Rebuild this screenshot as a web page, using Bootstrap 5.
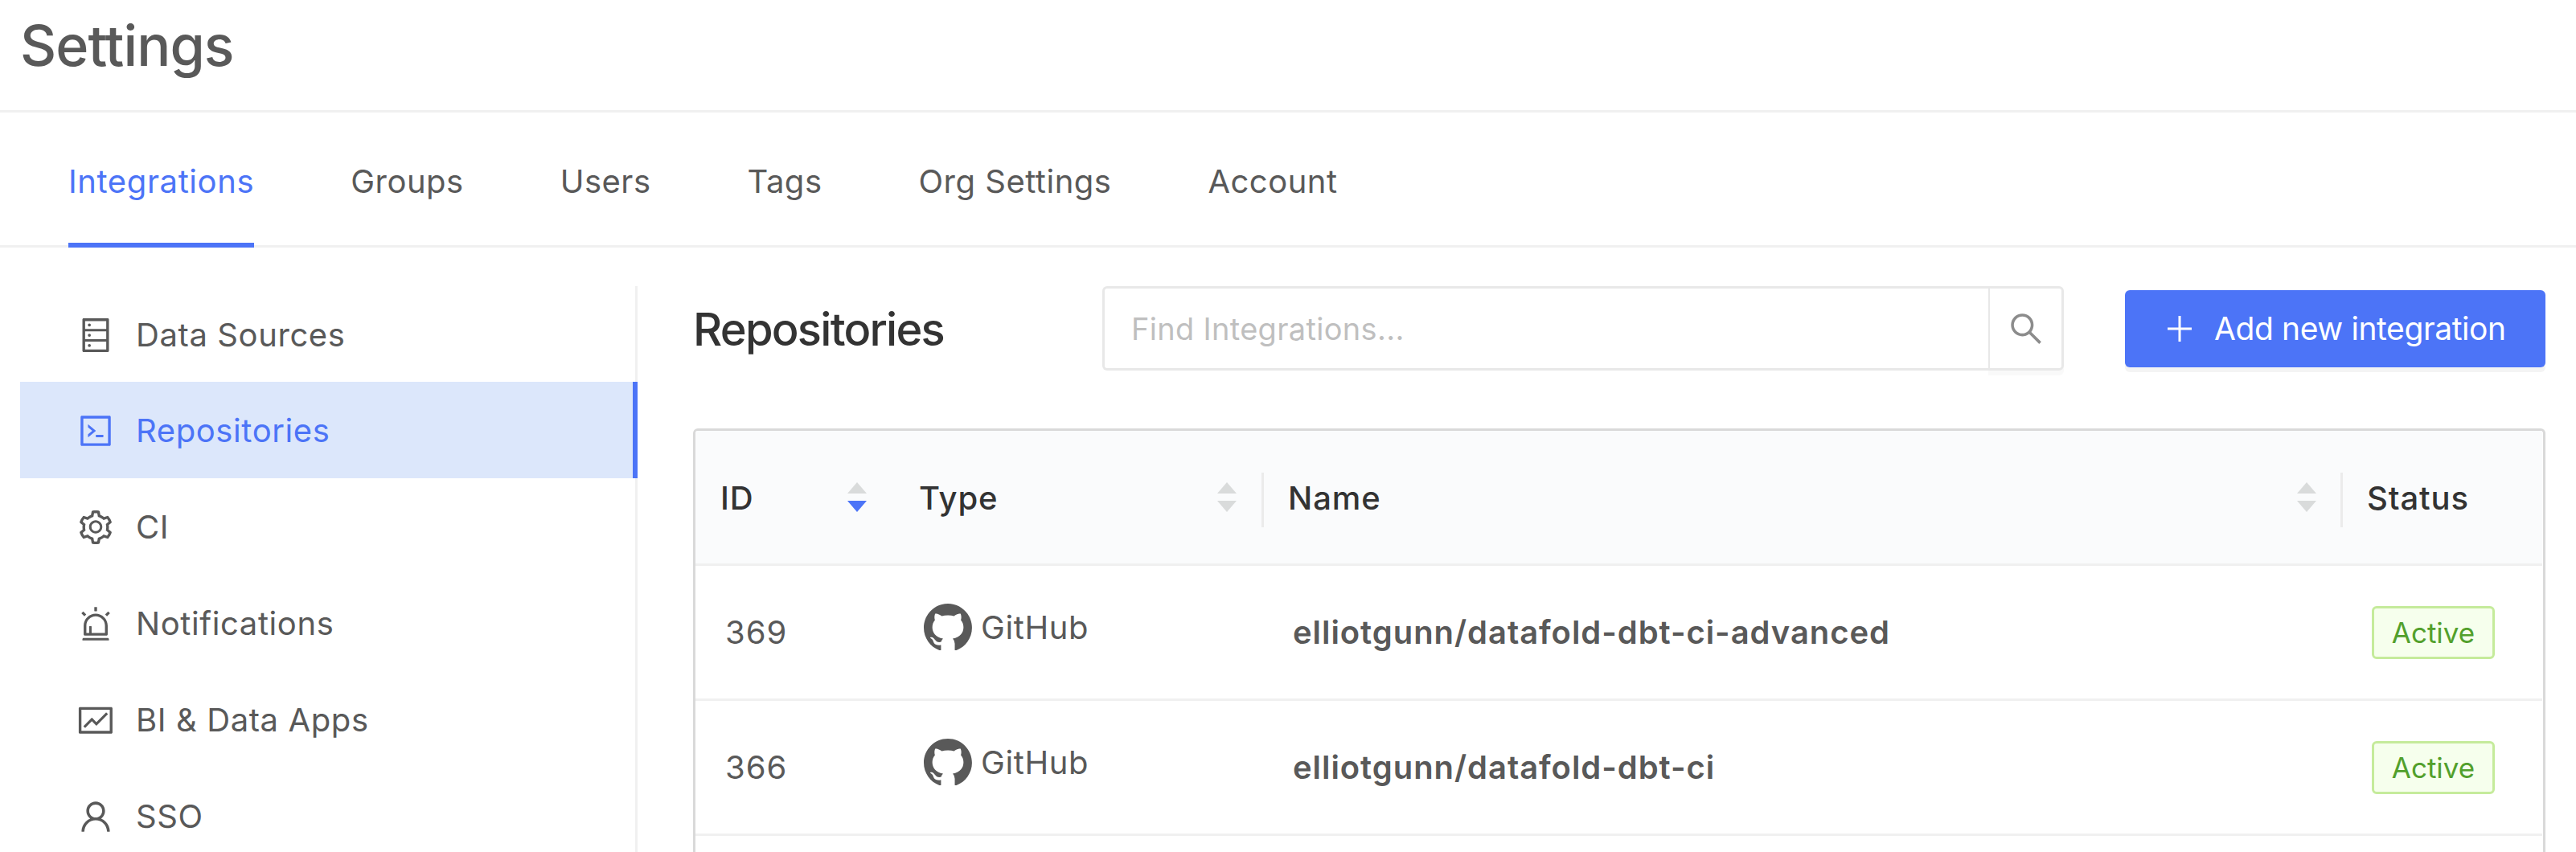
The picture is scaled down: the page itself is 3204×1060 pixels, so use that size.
<!DOCTYPE html>
<html lang="en">
<head>
<meta charset="utf-8">
<title>Settings</title>
<link href="https://cdn.jsdelivr.net/npm/bootstrap@5.3.0/dist/css/bootstrap.min.css" rel="stylesheet">
<style>
html,body{height:1060px;overflow:hidden;background:#fff}
body{font-family:Inter,"Liberation Sans",sans-serif;font-size:40px;color:#595959;line-height:1.5;letter-spacing:.6px}
.pg-head{height:140px;border-bottom:3px solid #f0f0f0;padding:0 25px}
.pg-title{font-size:70px;line-height:114px;font-weight:500;color:#595959;margin:0;letter-spacing:-.9px}
.tab-bar{height:168px;border-bottom:3px solid #f0f0f0;padding-left:85px;gap:120px;letter-spacing:.5px}
.tab-bar .nav-link{padding:0;height:168px;line-height:172px;color:#595959;font-size:40px;border-bottom:6px solid transparent}
.tab-bar .nav-link.active{color:#4c74f7;border-bottom-color:#4c74f7;letter-spacing:.6px}
.side-wrap{width:768px;margin-left:25px;margin-top:48px;box-shadow:inset -3px 0 0 #f0f0f0;height:704px;flex:none;overflow:hidden}
.side-item{height:120px;padding:2px 0 0 70px;border:0;border-radius:0;color:#595959;font-size:40px;gap:26px;width:768px;background:transparent}
.side-item.active{background:#dce7fb;color:#4c74f7;border-right:6px solid #4c74f7}
.ico{fill:currentColor;flex:none}
.main-pane{flex:1;padding:48px 38px 0 69px;min-width:0}
.tool-row{height:177px;align-items:flex-start}
.sec-title{font-size:56px;font-weight:500;color:#333;line-height:109px;width:509px;margin:0;letter-spacing:-1.75px;flex:none}
.find-box{width:1196px;height:105px;flex:none}
.find-box .form-control{height:105px;border:3px solid #e8e8e8;border-right:0;border-radius:6px 0 0 6px;font-size:38px;letter-spacing:.3px;padding:0 33px;color:#595959;box-shadow:none}
.find-box .form-control::placeholder{color:#bfbfbf}
.find-btn{width:94px;height:105px;padding:0;border:3px solid #e8e8e8;border-left:2px solid #e8e8e8;border-radius:0 6px 6px 0;color:#8c8c8c;background:#fff;box-shadow:0 6px 0 #f9f9f9}
.add-btn{margin-left:76px;margin-top:5px;width:523px;height:96px;background:#4c74f7;border:0;border-radius:6px;color:#fff;font-size:39px;letter-spacing:-.4px;padding:0 0 0 53px;gap:28px;box-shadow:0 6px 0 #f4f4f4;white-space:nowrap}
.tbl-wrap{border:3px solid #d9d9d9;border-bottom:0;border-radius:6px 6px 0 0;height:527px;overflow:hidden}
.repo-tbl{table-layout:fixed;width:2297px;margin:0;font-size:40px;border-collapse:separate;border-spacing:0}
.cw-id{width:247px}.cw-type{width:459px}.cw-name{width:1342px}.cw-state{width:249px}
.repo-tbl th{height:168px;background:#fafbfc;border-bottom:3px solid #f0f0f0;color:#333;font-weight:500;letter-spacing:.9px;padding:2px 0 0 31px;vertical-align:middle;position:relative;box-shadow:none}
.repo-tbl td{height:168px;border-bottom:3px solid #f0f0f0;padding:1px 0 0 37px;vertical-align:middle;color:#595959;box-shadow:none;background:#fff}
.repo-tbl td.id-cell{letter-spacing:1px}
.th-in{display:flex;align-items:center;justify-content:space-between}
.sorter{display:flex;flex-direction:column;gap:9px;flex:none;margin-top:-2px}
.sorter i{display:block;width:0;height:0;border-left:12px solid transparent;border-right:12px solid transparent}
.sorter .up{border-bottom:14px solid #d9dbdb}
.sorter .dn{border-top:14px solid #d9dbdb}
.sorter .dn.on{border-top-color:#4c74f7}
.sort-a{margin-right:34px}.sort-b{margin-right:33px}.sort-c{margin-right:32px}
.th-sep::before{content:"";position:absolute;left:-2px;top:52px;width:3px;height:68px;background:#ebebeb}
.gh-cell{display:flex;align-items:flex-start;gap:11px;margin-top:-12px}
.repo-tbl td.repo-name{font-weight:600;color:#595959;letter-spacing:.94px}
.state-tag{display:inline-block;width:153px;height:66px;line-height:60px;text-align:center;border:3px solid #c5eb9b;background:#f6ffed;color:#52a02c;border-radius:6px;font-size:35px;letter-spacing:0}
</style>
</head>
<body>
<div class="pg-head"><h1 class="pg-title">Settings</h1></div>
<nav class="nav tab-bar">
  <a class="nav-link active" href="#">Integrations</a>
  <a class="nav-link" href="#">Groups</a>
  <a class="nav-link" href="#">Users</a>
  <a class="nav-link" href="#">Tags</a>
  <a class="nav-link" href="#">Org Settings</a>
  <a class="nav-link" href="#">Account</a>
</nav>
<div class="d-flex">
  <div class="side-wrap">
    <div class="list-group list-group-flush">
      <a href="#" class="list-group-item side-item d-flex align-items-center"><svg class="ico" width="48" height="48" viewBox="0 0 1024 1024"><path d="M832 64H192c-17.7 0-32 14.3-32 32v832c0 17.7 14.3 32 32 32h640c17.7 0 32-14.3 32-32V96c0-17.7-14.3-32-32-32zm-600 72h560v208H232V136zm560 480H232V408h560v208zm0 272H232V680h560v208zM304 240a40 40 0 1 0 80 0 40 40 0 1 0-80 0zm0 272a40 40 0 1 0 80 0 40 40 0 1 0-80 0zm0 272a40 40 0 1 0 80 0 40 40 0 1 0-80 0z"/></svg>Data Sources</a>
      <a href="#" class="list-group-item side-item active d-flex align-items-center"><svg class="ico" width="48" height="48" viewBox="0 0 1024 1024"><path d="M516 673c0 4.4 3.4 8 7.5 8h185c4.1 0 7.5-3.6 7.5-8v-48c0-4.4-3.4-8-7.5-8h-185c-4.1 0-7.5 3.6-7.5 8v48zm-194.9 6.1l192-161c3.8-3.2 3.8-9.1 0-12.3l-192-160.9A7.95 7.95 0 0 0 308 351v62.7c0 2.4 1 4.6 2.9 6.1L420.7 512l-109.8 92.2a8.1 8.1 0 0 0-2.9 6.1V673c0 6.8 7.9 10.5 13.1 6.1zM880 112H144c-17.7 0-32 14.3-32 32v736c0 17.7 14.3 32 32 32h736c17.7 0 32-14.3 32-32V144c0-17.7-14.3-32-32-32zm-40 728H184V184h656v656z"/></svg>Repositories</a>
      <a href="#" class="list-group-item side-item d-flex align-items-center"><svg class="ico" width="48" height="48" viewBox="0 0 1024 1024"><path d="M924.8 625.7l-65.5-56c3.1-19 4.7-38.4 4.7-57.8s-1.6-38.8-4.7-57.8l65.5-56a32.03 32.03 0 0 0 9.3-35.2l-.9-2.6a443.74 443.74 0 0 0-79.7-137.9l-1.8-2.1a32.12 32.12 0 0 0-35.1-9.5l-81.3 28.9c-30-24.6-63.5-44-99.7-57.6l-15.7-85a32.05 32.05 0 0 0-25.8-25.7l-2.7-.5c-52.1-9.4-106.9-9.4-159 0l-2.7.5a32.05 32.05 0 0 0-25.8 25.7l-15.8 85.4a351.86 351.86 0 0 0-99 57.4l-81.9-29.1a32 32 0 0 0-35.1 9.5l-1.8 2.1a446.02 446.02 0 0 0-79.7 137.9l-.9 2.6c-4.5 12.5-.8 26.5 9.3 35.2l66.3 56.6c-3.1 18.8-4.6 38-4.6 57.1 0 19.2 1.5 38.4 4.6 57.1L99 625.5a32.03 32.03 0 0 0-9.3 35.2l.9 2.6c18.1 50.4 44.9 96.9 79.7 137.9l1.8 2.1a32.12 32.12 0 0 0 35.1 9.5l81.9-29.1c29.8 24.5 63.1 43.9 99 57.4l15.8 85.4a32.05 32.05 0 0 0 25.8 25.7l2.7.5a449.4 449.4 0 0 0 159 0l2.7-.5a32.05 32.05 0 0 0 25.8-25.7l15.7-85a350 350 0 0 0 99.7-57.6l81.3 28.9a32 32 0 0 0 35.1-9.5l1.8-2.1c34.8-41.1 61.6-87.5 79.7-137.9l.9-2.6c4.5-12.3.8-26.3-9.3-35zM788.3 465.9c2.5 15.1 3.8 30.6 3.8 46.1s-1.3 31-3.8 46.1l-6.6 40.1 74.7 63.9a370.03 370.03 0 0 1-42.6 73.6L721 702.8l-31.4 25.8c-23.9 19.6-50.5 35-79.3 45.8l-38.1 14.3-17.9 97a377.5 377.5 0 0 1-85 0l-17.9-97.2-37.8-14.5c-28.5-10.8-55-26.2-78.7-45.7l-31.4-25.9-93.4 33.2c-17-22.9-31.2-47.6-42.6-73.6l75.5-64.5-6.5-40c-2.4-14.9-3.7-30.3-3.7-45.5 0-15.3 1.2-30.6 3.7-45.5l6.5-40-75.5-64.5c11.3-26.1 25.6-50.7 42.6-73.6l93.4 33.2 31.4-25.9c23.7-19.5 50.2-34.9 78.7-45.7l37.9-14.3 17.9-97.2c28.1-3.2 56.8-3.2 85 0l17.9 97 38.1 14.3c28.7 10.8 55.4 26.2 79.3 45.8l31.4 25.8 92.8-32.9c17 22.9 31.2 47.6 42.6 73.6L781.8 426l6.5 39.9zM512 326c-97.2 0-176 78.8-176 176s78.8 176 176 176 176-78.8 176-176-78.8-176-176-176zm79.2 255.2A111.6 111.6 0 0 1 512 614c-29.9 0-58-11.7-79.2-32.8A111.6 111.6 0 0 1 400 502c0-29.9 11.7-58 32.8-79.2C454 401.6 482.1 390 512 390c29.9 0 58 11.6 79.2 32.8A111.6 111.6 0 0 1 624 502c0 29.9-11.7 58-32.8 79.2z"/></svg>CI</a>
      <a href="#" class="list-group-item side-item d-flex align-items-center"><svg class="ico" width="48" height="48" viewBox="0 0 1024 1024"><path d="M193 796c0 17.7 14.3 32 32 32h574c17.7 0 32-14.3 32-32V563c0-176.2-142.8-319-319-319S193 386.8 193 563v233zm72-233c0-136.4 110.6-247 247-247s247 110.6 247 247v193H404V585c0-5.5-4.5-10-10-10h-44c-5.5 0-10 4.5-10 10v171h-75V563zm-48.1-252.5l39.6-39.6c3.1-3.1 3.1-8.2 0-11.3l-67.9-67.9a8.03 8.03 0 0 0-11.3 0l-39.6 39.6a8.03 8.03 0 0 0 0 11.3l67.9 67.9c3.1 3.1 8.1 3.1 11.3 0zm669.6-79.2l-39.6-39.6a8.03 8.03 0 0 0-11.3 0l-67.9 67.9a8.03 8.03 0 0 0 0 11.3l39.6 39.6c3.1 3.1 8.2 3.1 11.3 0l67.9-67.9c3.1-3.2 3.1-8.2 0-11.3zM832 892H192c-17.7 0-32 14.3-32 32v24c0 4.4 3.6 8 8 8h688c4.4 0 8-3.6 8-8v-24c0-17.7-14.3-32-32-32zM484 180h56c4.4 0 8-3.6 8-8V76c0-4.4-3.6-8-8-8h-56c-4.4 0-8 3.6-8 8v96c0 4.4 3.6 8 8 8z"/></svg>Notifications</a>
      <a href="#" class="list-group-item side-item d-flex align-items-center"><svg class="ico" width="48" height="48" viewBox="0 0 1024 1024"><path d="M926 164H94c-17.7 0-32 14.3-32 32v640c0 17.7 14.3 32 32 32h832c17.7 0 32-14.3 32-32V196c0-17.7-14.3-32-32-32zm-40 632H134V236h752v560zm-658.9-82.3c3.1 3.1 8.2 3.1 11.3 0l172.5-172.5 114.4 114.5c3.1 3.1 8.2 3.1 11.3 0l297-297.2c3.1-3.1 3.1-8.2 0-11.3l-36.8-36.8a8.03 8.03 0 0 0-11.3 0L531 565 416.6 450.5a8.03 8.03 0 0 0-11.3 0l-214.9 215a8.03 8.03 0 0 0 0 11.3l36.7 36.9z"/></svg>BI &amp; Data Apps</a>
      <a href="#" class="list-group-item side-item d-flex align-items-center"><svg class="ico" width="48" height="48" viewBox="0 0 1024 1024"><path d="M858.5 763.6a374 374 0 0 0-80.6-119.5 375.63 375.63 0 0 0-119.5-80.6c-.4-.2-.8-.3-1.2-.5C719.5 518 760 444.7 760 362c0-137-111-248-248-248S264 225 264 362c0 82.7 40.5 156 102.8 201.1-.4.2-.8.3-1.2.5-44.8 18.9-85 46-119.5 80.6a375.63 375.63 0 0 0-80.6 119.5A371.7 371.7 0 0 0 136 901.8a8 8 0 0 0 8 8.2h60c4.4 0 7.9-3.5 8-7.8 2-77.2 33-149.5 87.8-204.3 56.7-56.7 132-87.9 212.2-87.9s155.5 31.2 212.2 87.9C779 752.7 810 825 812 902.2c.1 4.4 3.6 7.8 8 7.8h60a8 8 0 0 0 8-8.2c-1-47.8-10.9-94.3-29.5-138.2zM512 534c-45.9 0-89.1-17.9-121.6-50.4S340 407.9 340 362c0-45.9 17.9-89.1 50.4-121.6S466.1 190 512 190s89.1 17.9 121.6 50.4S684 316.1 684 362c0 45.9-17.9 89.1-50.4 121.6S557.9 534 512 534z"/></svg>SSO</a>
    </div>
  </div>
  <div class="main-pane">
    <div class="d-flex tool-row">
      <h2 class="sec-title">Repositories</h2>
      <div class="input-group find-box">
        <input type="text" class="form-control" placeholder="Find Integrations...">
        <button class="btn find-btn d-flex align-items-center justify-content-center" type="button" aria-label="Search"><svg class="ico" width="48" height="48" viewBox="0 0 1024 1024"><path d="M909.6 854.5L649.9 594.8C690.2 542.7 712 479 712 412c0-80.2-31.3-155.4-87.9-212.1-56.6-56.7-132-87.9-212.1-87.9s-155.5 31.3-212.1 87.9C143.2 256.5 112 331.8 112 412c0 80.1 31.3 155.5 87.9 212.1C256.5 680.8 331.8 712 412 712c67 0 130.6-21.8 182.7-62l259.7 259.6a8.2 8.2 0 0 0 11.6 0l43.6-43.5a8.2 8.2 0 0 0 0-11.6zM570.4 570.4C528 612.7 471.8 636 412 636s-116-23.3-158.4-65.6C211.3 528 188 471.8 188 412s23.3-116.1 65.6-158.4C296 211.3 352.2 188 412 188s116.1 23.2 158.4 65.6S636 352.2 636 412s-23.3 116.1-65.6 158.4z"/></svg></button>
      </div>
      <button class="btn add-btn d-flex align-items-center" type="button"><svg class="ico" width="30" height="32" viewBox="0 0 30 32"><path d="M13.5 0h3v32h-3zM0 14.5h30v3H0z"/></svg>Add new integration</button>
    </div>
    <div class="tbl-wrap">
      <table class="table repo-tbl">
        <colgroup><col class="cw-id"><col class="cw-type"><col class="cw-name"><col class="cw-state"></colgroup>
        <thead>
          <tr>
            <th><div class="th-in"><span>ID</span><span class="sorter sort-a"><i class="up"></i><i class="dn on"></i></span></div></th>
            <th><div class="th-in"><span>Type</span><span class="sorter sort-b"><i class="up"></i><i class="dn"></i></span></div></th>
            <th class="th-sep"><div class="th-in"><span>Name</span><span class="sorter sort-c"><i class="up"></i><i class="dn"></i></span></div></th>
            <th class="th-sep">Status</th>
          </tr>
        </thead>
        <tbody>
          <tr>
            <td class="id-cell">369</td>
            <td><div class="gh-cell"><svg class="ico" width="60" height="58" viewBox="64 76 896 866"><path d="M511.6 76.3C264.3 76.2 64 276.4 64 523.5 64 718.9 189.3 885 363.8 946c23.5 5.9 19.9-10.8 19.9-22.2v-77.5c-135.7 15.9-141.2-73.9-150.3-88.9C215 726 171.5 718 184.5 703c30.9-15.9 62.4 4 98.9 57.9 26.4 39.1 77.9 32.5 104 26 5.7-23.5 17.9-44.5 34.7-60.8-140.6-25.2-199.2-111-199.2-213 0-49.5 16.3-95 48.3-131.7-20.4-60.5 1.9-112.3 4.9-120 58.1-5.2 118.5 41.6 123.2 45.3 33-8.9 70.7-13.6 112.9-13.6 42.4 0 80.2 4.9 113.5 13.9 11.3-8.6 67.3-48.8 121.3-43.9 2.9 7.7 24.7 58.3 5.5 118 32.4 36.8 48.9 82.7 48.9 132.3 0 102.2-59 188.1-200 212.9a127.5 127.5 0 0 1 38.1 91v112.5c.8 9 0 17.9 15 17.9 177.1-59.7 304.6-227 304.6-424.1 0-247.2-200.4-447.3-447.5-447.3z"/></svg><span>GitHub</span></div></td>
            <td class="repo-name">elliotgunn/datafold-dbt-ci-advanced</td>
            <td><span class="state-tag">Active</span></td>
          </tr>
          <tr>
            <td class="id-cell">366</td>
            <td><div class="gh-cell"><svg class="ico" width="60" height="58" viewBox="64 76 896 866"><path d="M511.6 76.3C264.3 76.2 64 276.4 64 523.5 64 718.9 189.3 885 363.8 946c23.5 5.9 19.9-10.8 19.9-22.2v-77.5c-135.7 15.9-141.2-73.9-150.3-88.9C215 726 171.5 718 184.5 703c30.9-15.9 62.4 4 98.9 57.9 26.4 39.1 77.9 32.5 104 26 5.7-23.5 17.9-44.5 34.7-60.8-140.6-25.2-199.2-111-199.2-213 0-49.5 16.3-95 48.3-131.7-20.4-60.5 1.9-112.3 4.9-120 58.1-5.2 118.5 41.6 123.2 45.3 33-8.9 70.7-13.6 112.9-13.6 42.4 0 80.2 4.9 113.5 13.9 11.3-8.6 67.3-48.8 121.3-43.9 2.9 7.7 24.7 58.3 5.5 118 32.4 36.8 48.9 82.7 48.9 132.3 0 102.2-59 188.1-200 212.9a127.5 127.5 0 0 1 38.1 91v112.5c.8 9 0 17.9 15 17.9 177.1-59.7 304.6-227 304.6-424.1 0-247.2-200.4-447.3-447.5-447.3z"/></svg><span>GitHub</span></div></td>
            <td class="repo-name">elliotgunn/datafold-dbt-ci</td>
            <td><span class="state-tag">Active</span></td>
          </tr>
          <tr><td></td><td></td><td></td><td></td></tr>
        </tbody>
      </table>
    </div>
  </div>
</div>
<script src="https://cdn.jsdelivr.net/npm/bootstrap@5.3.0/dist/js/bootstrap.bundle.min.js"></script>
</body>
</html>
